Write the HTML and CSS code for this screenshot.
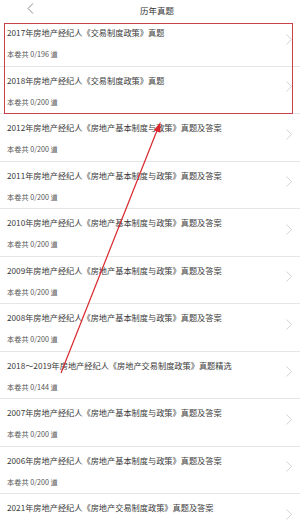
FILE: index.html
```html
<!DOCTYPE html>
<html lang="zh-CN">
<head>
  <meta charset="UTF-8" />
  <meta name="viewport" content="width=device-width, initial-scale=1.0"/>
  <title>历年真题</title>
  <link rel="stylesheet" href="styles.css">
</head>
<body>

  <div class="header">
    <svg class="back" width="7" height="11" viewBox="0 0 7 11"><path d="M6 0.5 L1 5.5 L6 10.5" fill="none" stroke="#888" stroke-width="1"/></svg>
    <div class="header-title">历年真题</div>
  </div>

  <div class="list">
    <div class="row">
      <div class="row-text">
        <div class="row-title">2017年房地产经纪人《交易制度政策》真题</div>
        <div class="row-sub">本卷共 0/196 道</div>
      </div>
      <svg class="chevron" width="6" height="11" viewBox="0 0 6 11"><path d="M0.5 0.5 L5.5 5.5 L0.5 10.5" fill="none" stroke="#d4d4d4" stroke-width="1"/></svg>
    </div>
    <div class="row">
      <div class="row-text">
        <div class="row-title">2018年房地产经纪人《交易制度政策》真题</div>
        <div class="row-sub">本卷共 0/200 道</div>
      </div>
      <svg class="chevron" width="6" height="11" viewBox="0 0 6 11"><path d="M0.5 0.5 L5.5 5.5 L0.5 10.5" fill="none" stroke="#d4d4d4" stroke-width="1"/></svg>
    </div>
    <div class="row">
      <div class="row-text">
        <div class="row-title">2012年房地产经纪人《房地产基本制度与政策》真题及答案</div>
        <div class="row-sub">本卷共 0/200 道</div>
      </div>
      <svg class="chevron" width="6" height="11" viewBox="0 0 6 11"><path d="M0.5 0.5 L5.5 5.5 L0.5 10.5" fill="none" stroke="#d4d4d4" stroke-width="1"/></svg>
    </div>
    <div class="row">
      <div class="row-text">
        <div class="row-title">2011年房地产经纪人《房地产基本制度与政策》真题及答案</div>
        <div class="row-sub">本卷共 0/200 道</div>
      </div>
      <svg class="chevron" width="6" height="11" viewBox="0 0 6 11"><path d="M0.5 0.5 L5.5 5.5 L0.5 10.5" fill="none" stroke="#d4d4d4" stroke-width="1"/></svg>
    </div>
    <div class="row">
      <div class="row-text">
        <div class="row-title">2010年房地产经纪人《房地产基本制度与政策》真题及答案</div>
        <div class="row-sub">本卷共 0/200 道</div>
      </div>
      <svg class="chevron" width="6" height="11" viewBox="0 0 6 11"><path d="M0.5 0.5 L5.5 5.5 L0.5 10.5" fill="none" stroke="#d4d4d4" stroke-width="1"/></svg>
    </div>
    <div class="row">
      <div class="row-text">
        <div class="row-title">2009年房地产经纪人《房地产基本制度与政策》真题及答案</div>
        <div class="row-sub">本卷共 0/200 道</div>
      </div>
      <svg class="chevron" width="6" height="11" viewBox="0 0 6 11"><path d="M0.5 0.5 L5.5 5.5 L0.5 10.5" fill="none" stroke="#d4d4d4" stroke-width="1"/></svg>
    </div>
    <div class="row">
      <div class="row-text">
        <div class="row-title">2008年房地产经纪人《房地产基本制度与政策》真题及答案</div>
        <div class="row-sub">本卷共 0/200 道</div>
      </div>
      <svg class="chevron" width="6" height="11" viewBox="0 0 6 11"><path d="M0.5 0.5 L5.5 5.5 L0.5 10.5" fill="none" stroke="#d4d4d4" stroke-width="1"/></svg>
    </div>
    <div class="row">
      <div class="row-text">
        <div class="row-title">2018～2019年房地产经纪人《房地产交易制度政策》真题精选</div>
        <div class="row-sub">本卷共 0/144 道</div>
      </div>
      <svg class="chevron" width="6" height="11" viewBox="0 0 6 11"><path d="M0.5 0.5 L5.5 5.5 L0.5 10.5" fill="none" stroke="#d4d4d4" stroke-width="1"/></svg>
    </div>
    <div class="row">
      <div class="row-text">
        <div class="row-title">2007年房地产经纪人《房地产基本制度与政策》真题及答案</div>
        <div class="row-sub">本卷共 0/200 道</div>
      </div>
      <svg class="chevron" width="6" height="11" viewBox="0 0 6 11"><path d="M0.5 0.5 L5.5 5.5 L0.5 10.5" fill="none" stroke="#d4d4d4" stroke-width="1"/></svg>
    </div>
    <div class="row">
      <div class="row-text">
        <div class="row-title">2006年房地产经纪人《房地产基本制度与政策》真题及答案</div>
        <div class="row-sub">本卷共 0/200 道</div>
      </div>
      <svg class="chevron" width="6" height="11" viewBox="0 0 6 11"><path d="M0.5 0.5 L5.5 5.5 L0.5 10.5" fill="none" stroke="#d4d4d4" stroke-width="1"/></svg>
    </div>
    <div class="row">
      <div class="row-text">
        <div class="row-title">2021年房地产经纪人《房地产交易制度政策》真题及答案</div>
      </div>
      <svg class="chevron" width="6" height="11" viewBox="0 0 6 11"><path d="M0.5 0.5 L5.5 5.5 L0.5 10.5" fill="none" stroke="#d4d4d4" stroke-width="1"/></svg>
    </div>
  </div>

  <!-- annotation drawn over the list -->
  <div class="mark-box"></div>
  <svg class="mark-arrow" width="300" height="523" viewBox="0 0 300 523">
    <line x1="61" y1="373" x2="158" y2="128" stroke="#d8262c" stroke-width="1.2"/>
    <polygon points="160.5,122 160.3,132.8 153.9,130.3" fill="#d8262c"/>
  </svg>

</body>
</html>
```

FILE: styles.css
```css
body {
  margin: 0;
  width: 300px;
  height: 523px;
  overflow: hidden;
  position: relative;
  background: #fff;
  font-family: "Noto Sans CJK SC", "Noto Sans", sans-serif;
  color: #333;
}

.header {
  height: 19px;
  display: flex;
  align-items: center;
  justify-content: center;
  position: relative;
}

.header-title {
  font-size: 8.5px;
  color: #333;
  margin-left: 14px;
}

.back {
  position: absolute;
  left: 27px;
  top: 3px;
}

.list {
  height: 504px;
  overflow: hidden;
}

.row {
  height: 47.5px;
  box-sizing: border-box;
  border-bottom: 1px solid #e6e6e6;
  display: flex;
  align-items: center;
  padding: 0 8px 0 7px;
}

.row-text {
  flex: 1;
  align-self: flex-start;
  padding-top: 7px;
}

.row-title {
  font-size: 8.2px;
  line-height: 12px;
  color: #3a3a3a;
  white-space: nowrap;
}

.row-sub {
  font-size: 7.2px;
  line-height: 10px;
  margin-top: 11px;
  color: #555;
  white-space: nowrap;
}

.chevron {
  margin-top: -6px;
}

.mark-box {
  position: absolute;
  left: 4px;
  top: 23px;
  width: 289px;
  height: 91px;
  border: 1.2px solid #c8424a;
  box-sizing: border-box;
}

.mark-arrow {
  position: absolute;
  left: 0;
  top: 0;
  pointer-events: none;
}
```
